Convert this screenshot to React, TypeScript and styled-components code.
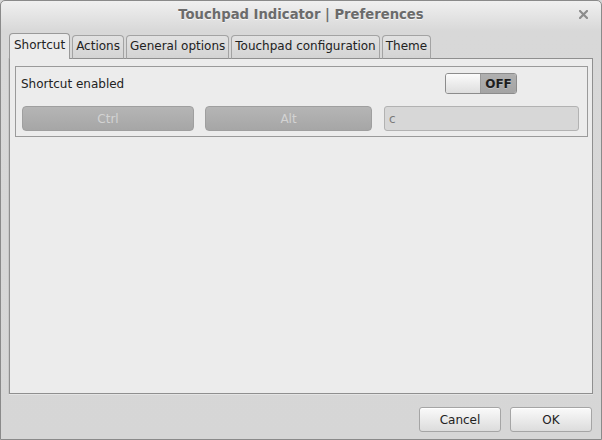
import React from "react";
import styled, { createGlobalStyle } from "styled-components";

const Global = createGlobalStyle`
  html, body { margin: 0; padding: 0; background: #d6d6d6; }
  body { font-family: "DejaVu Sans", "Liberation Sans", sans-serif; font-size: 12px; color: #222; }
  * { box-sizing: border-box; }
`;

const Window = styled.div`
  width: 602px;
  height: 440px;
  border: 1px solid #8a8a8a;
  border-radius: 5px 5px 0 0;
  background: linear-gradient(#f0f0f0 0px, #d8d8d8 30px, #d6d6d6 100%);
  display: flex;
  flex-direction: column;
  overflow: hidden;
`;

const TitleBar = styled.div`
  height: 27px;
  flex: none;
  display: flex;
  align-items: center;
  justify-content: center;
  position: relative;
`;

const Title = styled.div`
  font-weight: bold;
  font-size: 13.2px;
  color: #6b6b6b;
  text-shadow: 0 1px 0 rgba(255, 255, 255, 0.7);
`;

const Close = styled.div`
  position: absolute;
  right: 11px;
  top: 6px;
  width: 14px;
  height: 14px;
  display: flex;
  align-items: center;
  justify-content: center;
`;

const Body = styled.div`
  flex: 1;
  display: flex;
  flex-direction: column;
  padding: 5px 8px 7px 8px;
`;

const TabRow = styled.div`
  display: flex;
  align-items: flex-end;
  gap: 2px;
  height: 26px;
  position: relative;
  z-index: 1;
  margin-bottom: -1px;
`;

const Tab = styled.div<{ $active?: boolean }>`
  height: ${(p) => (p.$active ? 26 : 24)}px;
  padding: 0 ${(p) => (p.$active ? 4 : 3)}px
    ${(p) => (p.$active ? 3 : 2)}px;
  display: flex;
  align-items: center;
  border: 1px solid ${(p) => (p.$active ? "#999" : "#a3a3a3")};
  border-bottom: ${(p) => (p.$active ? "none" : "1px solid #8f8f8f")};
  border-radius: 4px 4px 0 0;
  background: ${(p) =>
    p.$active ? "#ececec" : "linear-gradient(#e2e2e2, #d4d4d4)"};
  color: #222;
  white-space: nowrap;
`;

const Panel = styled.div`
  height: 336px;
  border: 1px solid #8f8f8f;
  background: #ececec;
  box-shadow: 0 1px 0 #e4e4e4, -1px 0 0 #c8c8c8;
  padding: 7px 4px 0 5px;
`;

const Frame = styled.div`
  border: 1px solid #9a9a9a;
  padding: 6px 6px 5px 6px;
  display: grid;
  grid-template-columns: 172px 167px 196px;
  column-gap: 11px;
  row-gap: 12px;
  align-items: center;
  & > :nth-child(5) { margin-left: 1px; }
`;

const Label = styled.div`
  padding-top: 1px;
  margin-left: -1px;
`;

const SwitchCell = styled.div`
  grid-column: 3;
  display: flex;
  justify-content: center;
`;

const Switch = styled.div`
  width: 72px;
  height: 21px;
  border: 1px solid #8c8c8c;
  border-radius: 3px;
  display: flex;
  overflow: hidden;
`;

const Knob = styled.div`
  width: 35px;
  background: linear-gradient(#fbfbfb, #dedede);
  border-right: 1px solid #9a9a9a;
`;

const SwitchText = styled.div`
  flex: 1;
  background: linear-gradient(#b0b0b0, #a4a4a4);
  font-weight: bold;
  font-size: 12px;
  color: #1e1e1e;
  display: flex;
  align-items: center;
  justify-content: center;
  text-shadow: 0 1px 0 rgba(255, 255, 255, 0.25);
`;

const KeyButton = styled.div`
  height: 25px;
  border: 1px solid #9f9f9f;
  border-radius: 4px;
  background: linear-gradient(#b5b5b5, #a6a6a6);
  color: #d3d3d3;
  display: flex;
  align-items: center;
  justify-content: center;
`;

const Entry = styled.div`
  height: 25px;
  border: 1px solid #b2b2b2;
  border-radius: 3px;
  background: #d7d7d7;
  color: #7a7a7a;
  display: flex;
  align-items: center;
  padding-left: 4px;
`;

const Footer = styled.div`
  display: flex;
  justify-content: flex-end;
  gap: 9px;
  margin-top: 13px;
  padding-right: 1px;
`;

const Button = styled.div`
  width: 82px;
  height: 25px;
  border: 1px solid #a5a5a5;
  border-radius: 3px;
  background: linear-gradient(#fafafa, #dcdcdc);
  display: flex;
  align-items: center;
  justify-content: center;
  color: #222;
  box-shadow: inset 0 1px 0 #ffffff;
`;

export default function App() {
  return (
    <>
      <Global />
      <Window>
        <TitleBar>
          <Title>Touchpad Indicator | Preferences</Title>
          <Close>
            <svg width="9" height="9" viewBox="0 0 9 9">
              <path d="M1 1 L8 8 M8 1 L1 8" stroke="#8c8c8c" strokeWidth="2.2" strokeLinecap="square" />
            </svg>
          </Close>
        </TitleBar>
        <Body>
          <TabRow>
            <Tab $active>Shortcut</Tab>
            <Tab>Actions</Tab>
            <Tab>General options</Tab>
            <Tab>Touchpad configuration</Tab>
            <Tab>Theme</Tab>
          </TabRow>
          <Panel>
            <Frame>
              <Label>Shortcut enabled</Label>
              <SwitchCell>
                <Switch>
                  <Knob />
                  <SwitchText>OFF</SwitchText>
                </Switch>
              </SwitchCell>
              <KeyButton>Ctrl</KeyButton>
              <KeyButton>Alt</KeyButton>
              <Entry>c</Entry>
            </Frame>
          </Panel>
          <Footer>
            <Button>Cancel</Button>
            <Button>OK</Button>
          </Footer>
        </Body>
      </Window>
    </>
  );
}
